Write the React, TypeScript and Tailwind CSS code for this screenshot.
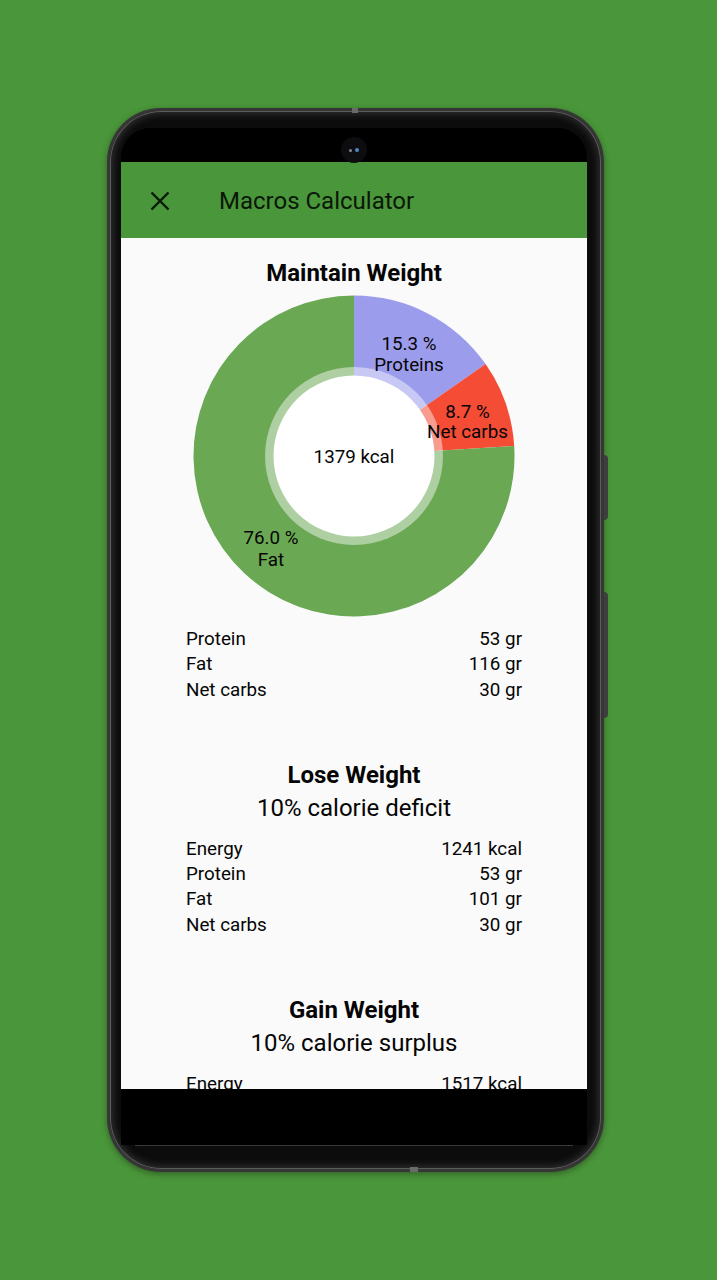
import React from 'react'

const GREEN = '#4a963a'

type Slice = { from: number; to: number; color: string }

const SLICES: Slice[] = [
  { from: 0, to: 55.08, color: '#9c9cec' },
  { from: 55.08, to: 86.4, color: '#f54c36' },
  { from: 86.4, to: 360, color: '#6aa854' },
]

function arc(cx: number, cy: number, r: number, from: number, to: number) {
  const p = (a: number) => {
    const rad = (a * Math.PI) / 180
    return [cx + r * Math.sin(rad), cy - r * Math.cos(rad)]
  }
  const [x1, y1] = p(from)
  const [x2, y2] = p(to)
  const large = to - from > 180 ? 1 : 0
  return `M${cx},${cy} L${x1},${y1} A${r},${r} 0 ${large} 1 ${x2},${y2} Z`
}

function Donut() {
  const c = 161
  return (
    <svg width="322" height="322" viewBox="0 0 322 322" className="mx-auto mt-[9px] block">
      {SLICES.map((s) => (
        <path key={s.color} d={arc(c, c, 160.5, s.from, s.to)} fill={s.color} />
      ))}
      <circle cx={c} cy={c} r={89} fill="rgba(255,255,255,0.45)" />
      <circle cx={c} cy={c} r={80.5} fill="#ffffff" />
      <g fontSize="18.8" fill="#050505" textAnchor="middle" fontFamily="Roboto, sans-serif">
        <text x="216" y="54.5">15.3 %</text>
        <text x="216" y="75.5">Proteins</text>
        <text x="274.5" y="122.5">8.7 %</text>
        <text x="274.5" y="143">Net carbs</text>
        <text x="78" y="249">76.0 %</text>
        <text x="78" y="270.5">Fat</text>
        <text x="161" y="167.5">1379 kcal</text>
      </g>
    </svg>
  )
}

function Rows({ rows }: { rows: [string, string][] }) {
  return (
    <div className="px-[65px]">
      {rows.map(([k, v]) => (
        <div key={k} className="flex justify-between text-[18.8px] leading-[25.3px] text-[#050505]">
          <span>{k}</span>
          <span>{v}</span>
        </div>
      ))}
    </div>
  )
}

function Section({ title, sub, rows }: { title: string; sub: string; rows: [string, string][] }) {
  return (
    <section className="mt-[59px]">
      <h2 className="text-center text-[24px] leading-[26px] font-bold text-[#050505]">{title}</h2>
      <p className="pt-[2px] text-center text-[24px] leading-[36px] text-[#050505]">{sub}</p>
      <div className="mt-[11px]">
        <Rows rows={rows} />
      </div>
    </section>
  )
}

export default function App() {
  return (
    <div
      className="w-[717px] h-[1280px] overflow-hidden pt-[108px] pl-[107px] font-['Roboto',sans-serif]"
      style={{ background: GREEN }}
    >
      <div className="relative w-[497px] h-[1064px] rounded-[54px] bg-[#363636] p-[3px] shadow-[0_2px_6px_rgba(0,0,0,0.35)]">
        {/* side buttons */}
        <div className="absolute right-[-4px] top-[347px] h-[65px] w-[4px] rounded-r-sm bg-[#3e3e3e]" />
        <div className="absolute right-[-4px] top-[484px] h-[126px] w-[4px] rounded-r-sm bg-[#3e3e3e]" />
        <div className="absolute left-1/2 top-0 h-[5px] w-[6px] -translate-x-[4px] bg-[#6a6a6a]" />
        <div className="absolute bottom-0 left-[303px] h-[5px] w-[8px] bg-[#6a6a6a]" />

        <div className="h-full w-full rounded-[51px] bg-[#0c0c0c] pt-[17px] pl-[11px] pr-[14px] shadow-[inset_0_0_0_1px_#5c5c5c,inset_0_0_6px_4px_#2a2a2a]">
          <div className="flex flex-col overflow-hidden rounded-t-[30px] bg-black">
            <div className="relative h-[34px] bg-black">
              <div className="absolute left-1/2 top-[9px] flex h-[26px] w-[26px] -translate-x-1/2 items-center justify-center gap-[3px] rounded-full bg-[#0d0d10]">
                <span className="h-[3px] w-[3px] rounded-full bg-[#7f8a96]" />
                <span className="h-[4px] w-[4px] rounded-full bg-[#4f86c8]" />
              </div>
            </div>

            <header className="flex h-[76px] items-center pt-[2px]" style={{ background: GREEN }}>
              <svg width="20" height="20" viewBox="0 0 20 20" className="ml-[29px]">
                <path d="M1.5 1.5 L18.5 18.5 M18.5 1.5 L1.5 18.5" stroke="#0a1808" strokeWidth="2.4" />
              </svg>
              <h1 className="ml-[49px] text-[24px] leading-[28px] text-[#0a1808]">Macros Calculator</h1>
            </header>

            <main className="h-[851px] overflow-hidden bg-[#fafafa]">
              <h2 className="mt-[22px] text-center text-[24px] leading-[26px] font-bold text-[#050505]">
                Maintain Weight
              </h2>
              <Donut />
              <div className="mt-[10px]">
                <Rows
                  rows={[
                    ['Protein', '53 gr'],
                    ['Fat', '116 gr'],
                    ['Net carbs', '30 gr'],
                  ]}
                />
              </div>
              <Section
                title="Lose Weight"
                sub="10% calorie deficit"
                rows={[
                  ['Energy', '1241 kcal'],
                  ['Protein', '53 gr'],
                  ['Fat', '101 gr'],
                  ['Net carbs', '30 gr'],
                ]}
              />
              <Section
                title="Gain Weight"
                sub="10% calorie surplus"
                rows={[
                  ['Energy', '1517 kcal'],
                  ['Protein', '58 gr'],
                  ['Fat', '131 gr'],
                  ['Net carbs', '30 gr'],
                ]}
              />
            </main>

            <div className="h-[56px] bg-black" />
          </div>
          <div className="mx-[14px] h-px bg-[#3a3a3a]" />
        </div>
      </div>
    </div>
  )
}
